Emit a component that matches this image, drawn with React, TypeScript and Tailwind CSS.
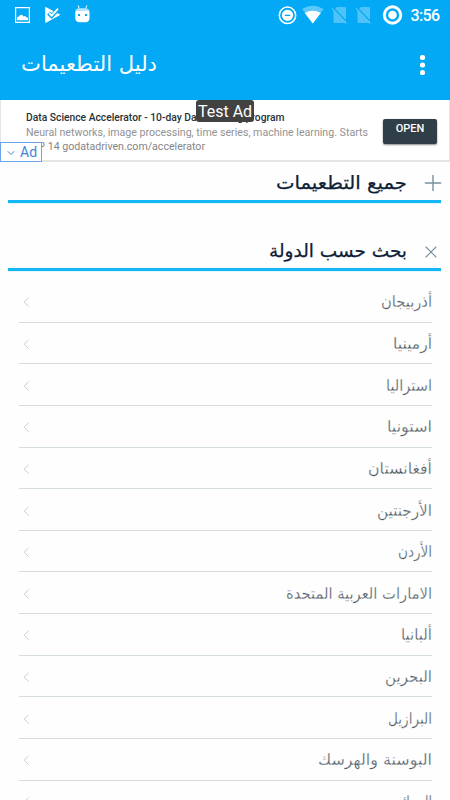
import { Plus, X, ChevronDown } from 'lucide-react';

const countries = [
  { name: 'أذربيجان', width: 'w-[51px]' },
  { name: 'أرمينيا', width: 'w-[39px]' },
  { name: 'استراليا', width: 'w-[46px]' },
  { name: 'استونيا', width: 'w-[45px]' },
  { name: 'أفغانستان', width: 'w-[64px]' },
  { name: 'الأرجنتين', width: 'w-[55px]' },
  { name: 'الأردن', width: 'w-[34px]' },
  { name: 'الامارات العربية المتحدة', width: 'w-[146px]' },
  { name: 'ألبانيا', width: 'w-[31px]' },
  { name: 'البحرين', width: 'w-[47px]' },
  { name: 'البرازيل', width: 'w-[44px]' },
  { name: 'البوسنة والهرسك', width: 'w-[114px]' },
  { name: 'الجزائر', width: 'w-[36px]' },
];

function StatusBar() {
  return (
    <div className="flex h-8 items-center text-white">
      <svg width="450" height="32" viewBox="0 0 450 32" fill="currentColor">
        <path fillRule="evenodd" d="M15 7h15v16H15zM16.200 8.200v13.600h12.600V8.200z" />
        <path d="M17 20.300v-2.300q0-1.500 2-1.500.8-2 2.500-1.800 1.500.3 2 1.800 1.500-1 2.500.500 2 .3 2 1.500v1.800z" />
        <path d="M45.200 7.800q0-1 1-.6l9 4.800 5.300 2.700-14 7.800q-1.300.6-1.300-.7z" />
        <path d="M48.500 13l3.200 3.200 6.300-7" fill="none" stroke="#03a9f5" strokeWidth="4" />
        <path d="M49 13l2.700 2.700 6.300-7" fill="none" stroke="currentColor" strokeWidth="1.800" />
        <path d="M78.200 5.500l1 3M86.800 5.500l-1 3" stroke="currentColor" strokeWidth="1" />
        <path d="M75.300 11.500q7-5 14.200 0v7q-.5 3.800-4 3.800h-6.200q-3.500 0-4-3.800z" />
        <path d="M75.300 11q1-2.800 4-2.800h6.200q3 0 4 2.800z" fill="#b5e4fc" />
        <path d="M78 14h2v2h-2zM85 14h2v2h-2z" fill="#03a9f5" />
        <circle cx="287.500" cy="15.300" r="8.200" fill="none" stroke="currentColor" strokeWidth="1.500" />
        <circle cx="287.500" cy="15.300" r="5.600" />
        <path d="M284.800 14.700h5.400v1.300h-5.400z" fill="#03a9f5" />
        <path d="M302 9q10.700-6.500 21.500 0l-10.700 14.500z" opacity=".35" />
        <path d="M304.800 13q8-4.500 16 0l-8 10.500z" />
        <g fill="#4fc3f8">
          <path d="M337 7h8q1 0 1 1v14q0 1-1 1h-10.500q-1 0-1-1V10.500z" />
          <path d="M333.500 8l14 14.500" stroke="#03a9f5" strokeWidth="1.200" />
          <path d="M332 8.500l14.500 15" stroke="#4fc3f8" strokeWidth="1.200" />
          <path d="M361 7h8q1 0 1 1v14q0 1-1 1h-10.500q-1 0-1-1V10.500z" />
          <path d="M357.500 8l14 14.500" stroke="#03a9f5" strokeWidth="1.200" />
          <path d="M356 8.500l14.500 15" stroke="#4fc3f8" strokeWidth="1.200" />
        </g>
        <circle cx="392.500" cy="15" r="8.200" fill="none" stroke="currentColor" strokeWidth="3" />
        <circle cx="392.500" cy="15" r="4.300" />
        <text x="410.500" y="21" textLength="29.500" className="font-['Roboto'] text-[16px] font-medium">3:56</text>
      </svg>
    </div>
  );
}

function AdBanner() {
  return (
    <div className="relative h-[62px] border-x border-b-2 border-[#e5e5e5] bg-white font-['Roboto',sans-serif]">
      <div className="flex justify-between pr-3 pl-[25px]">
        <div className="pt-[10px]">
          <svg width="345" height="46" viewBox="0 0 345 46" className="overflow-visible">
            <text y="11" textLength="258.500" lengthAdjust="spacingAndGlyphs" className="fill-[#263238] text-[11px] font-medium">Data Science Accelerator - 10-day Data training program</text>
            <text y="26" textLength="342" lengthAdjust="spacingAndGlyphs" className="fill-[#929292] text-[11px]">Neural networks, image processing, time series, machine learning. Starts</text>
            <text y="40" textLength="179" lengthAdjust="spacingAndGlyphs" className="fill-[#858585] text-[11px]">SEP 14 godatadriven.com/accelerator</text>
          </svg>
        </div>
        <div className="mt-[19px] flex h-[25px] w-[54px] items-center justify-center rounded-[2px] bg-[#2f3e47] pb-[4px] text-[11px] font-medium text-white shadow-[0_1px_2px_#0007]">
          OPEN
        </div>
      </div>
      <div className="absolute top-0 left-[195px] flex h-[22px] w-[58px] items-center justify-center rounded-[3px] bg-[#424242] pt-px text-[16px] whitespace-nowrap text-white">
        Test Ad
      </div>
      <div className="absolute top-[42px] -left-px flex h-5 w-[42px] items-center gap-[3px] border border-[#6aa5ea] bg-white pt-px pl-1 text-[14px] text-[#4285dc]">
        <ChevronDown size={12} strokeWidth={2} />
        Ad
      </div>
    </div>
  );
}

function SectionHeader({ title, width, open }: { title: string; width: string; open?: boolean }) {
  return (
    <div className="ml-2 mr-[9px] border-b border-[#e3f5fd]">
      <div className="flex h-[41px] items-start justify-end border-b-[3px] border-[#13b7f5] pt-[3px]">
        <FitText text={title} width={width} className="fill-[#0d2035] text-[18px] [stroke:#0d2035] [stroke-width:.25px]" />
        <div className="ml-[14px] flex h-[34px] w-5 justify-center pt-[9px] text-[#78909c]">
          {open ? (
            <X size={20} strokeWidth={1.3} className="shrink-0" />
          ) : (
            <Plus size={26} strokeWidth={1.3} className="-mt-[4px] ml-[3px] shrink-0" />
          )}
        </div>
      </div>
    </div>
  );
}

function FitText({ text, width, className }: { text: string; width: string; className: string }) {
  const size = Number(width.replace(/\D/g, ''));
  return (
    <svg className={`${width} h-8 shrink-0 overflow-visible`}>
      <text
        x={size}
        y="24"
        direction="rtl"
        textLength={size}
        lengthAdjust="spacingAndGlyphs"
        className={`font-['DejaVu_Sans',sans-serif] ${className}`}
      >
        {text}
      </text>
    </svg>
  );
}

export default function App() {
  return (
    <div className="h-[800px] w-[450px] overflow-hidden bg-[#fefefe] font-['Roboto',sans-serif]">
      <header className="h-[100px] bg-[#03a9f5] text-white">
        <StatusBar />
        <div className="flex items-center justify-between pt-[15px] pr-[25px] pl-[21px]">
          <FitText text="دليل التطعيمات" width="w-[136px]" className="fill-white text-[21px]" />
          <svg width="5" height="20" viewBox="0 0 5 20" fill="currentColor" className="mt-[3px]">
            <circle cx="2.500" cy="2.500" r="2.600" />
            <circle cx="2.500" cy="10" r="2.600" />
            <circle cx="2.500" cy="17.500" r="2.600" />
          </svg>
        </div>
      </header>
      <AdBanner />
      <main>
        <SectionHeader title="جميع التطعيمات" width="w-[131px]" />
        <div className="h-[26px]" />
        <SectionHeader title="بحث حسب الدولة" width="w-[138px]" open />
        <ul className="mr-[18px] ml-[19px] pt-[9px]">
          {countries.map(({ name, width }) => (
            <li key={name} className="flex h-[41.650px] items-center justify-between border-b border-[#d5dcde]">
              <svg width="16" height="16" viewBox="0 0 16 16" fill="none" stroke="#b9c4c9" className="mt-[2px]">
                <path d="M9.700 3.700L5.200 8.200l4.500 4.500" strokeWidth=".8" />
              </svg>
              <FitText text={name} width={width} className="-translate-y-[2px] fill-[#4d5761] text-[16px] [stroke:#fefefe] [stroke-width:.3px]" />
            </li>
          ))}
        </ul>
      </main>
    </div>
  );
}
